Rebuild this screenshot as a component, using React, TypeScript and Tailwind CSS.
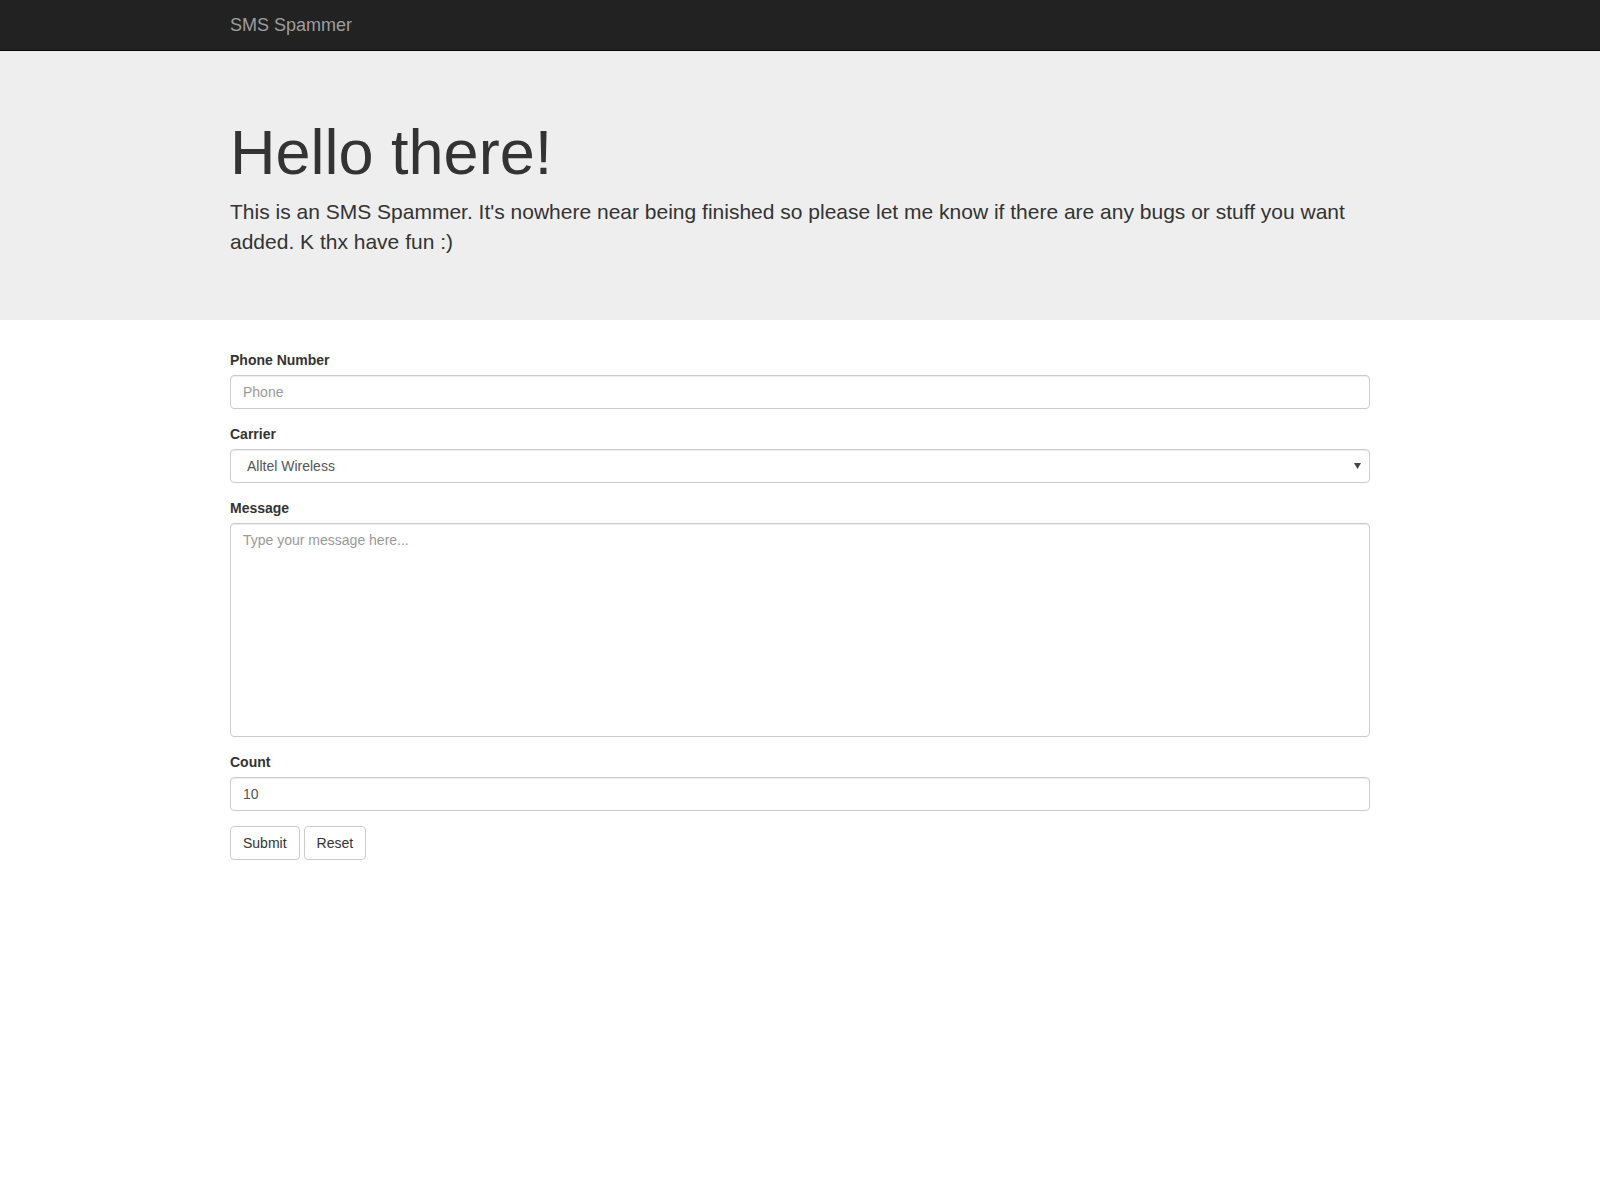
import React from "react";

export default function App() {
  const font = { fontFamily: '"Liberation Sans", Arial, Helvetica, sans-serif' };
  return (
    <div className="min-h-[1200px] bg-white text-[14px] leading-[20px] text-[#333]" style={font}>
      <nav className="h-[51px] bg-[#222] border-b border-[#080808]">
        <div className="w-[1170px] mx-auto px-[15px]">
          <a className="block h-[50px] py-[15px] text-[18px] leading-[20px] text-[#9d9d9d]">SMS Spammer</a>
        </div>
      </nav>
      <div className="bg-[#eee] pt-[47px] pb-[48px] mb-[30px]">
        <div className="w-[1170px] mx-auto px-[15px]">
          <h1 className="mt-[20px] mb-[10px] text-[63px] leading-[1.1] font-normal text-[#333]">Hello there!</h1>
          <p className="mb-[15px] text-[21px] leading-[30px] font-extralight text-[#333]">
            This is an SMS Spammer. It's nowhere near being finished so please let me know if there are any bugs or stuff you want added. K thx have fun :)
          </p>
        </div>
      </div>
      <div className="w-[1170px] mx-auto px-[15px]">
        <form onSubmit={(e) => e.preventDefault()}>
          <div className="mb-[15px]">
            <label className="block mb-[5px] font-bold text-[14px] leading-[20px]">Phone Number</label>
            <input
              type="text"
              placeholder="Phone"
              className="block w-full h-[34px] px-[12px] py-[6px] text-[14px] text-[#555] bg-white border border-[#ccc] rounded-[4px] shadow-[inset_0_1px_1px_rgba(0,0,0,0.075)] placeholder:text-[#999] outline-none"
            />
          </div>
          <div className="mb-[15px]">
            <label className="block mb-[5px] font-bold text-[14px] leading-[20px]">Carrier</label>
            <div className="relative">
              <select
                defaultValue="alltel"
                className="block w-full h-[34px] pl-[16px] pr-[24px] py-[6px] text-[14px] text-[#555] bg-white border border-[#ccc] rounded-[4px] shadow-[inset_0_1px_1px_rgba(0,0,0,0.075)] appearance-none outline-none"
              >
                <option value="alltel">Alltel Wireless</option>
                <option value="att">AT&amp;T</option>
                <option value="verizon">Verizon</option>
                <option value="tmobile">T-Mobile</option>
                <option value="sprint">Sprint</option>
              </select>
              <svg className="absolute right-[9px] top-[14px] pointer-events-none" width="7" height="6" viewBox="0 0 7 6">
                <path d="M0 0 L7 0 L3.5 6 Z" fill="#444" />
              </svg>
            </div>
          </div>
          <div className="mb-[15px]">
            <label className="block mb-[5px] font-bold text-[14px] leading-[20px]">Message</label>
            <textarea
              placeholder="Type your message here..."
              className="block w-full h-[214px] px-[12px] py-[6px] text-[14px] leading-[20px] text-[#555] bg-white border border-[#ccc] rounded-[4px] shadow-[inset_0_1px_1px_rgba(0,0,0,0.075)] placeholder:text-[#999] outline-none resize-none"
            />
          </div>
          <div className="mb-[15px]">
            <label className="block mb-[5px] font-bold text-[14px] leading-[20px]">Count</label>
            <input
              type="text"
              defaultValue="10"
              className="block w-full h-[34px] px-[12px] py-[6px] text-[14px] text-[#555] bg-white border border-[#ccc] rounded-[4px] shadow-[inset_0_1px_1px_rgba(0,0,0,0.075)] outline-none"
            />
          </div>
          <div className="flex gap-[4px]">
            <button type="submit" className="h-[34px] px-[12px] py-[6px] text-[14px] leading-[20px] text-[#333] bg-white border border-[#ccc] rounded-[4px]">
              Submit
            </button>
            <button type="reset" className="h-[34px] px-[12px] py-[6px] text-[14px] leading-[20px] text-[#333] bg-white border border-[#ccc] rounded-[4px]">
              Reset
            </button>
          </div>
        </form>
      </div>
    </div>
  );
}
